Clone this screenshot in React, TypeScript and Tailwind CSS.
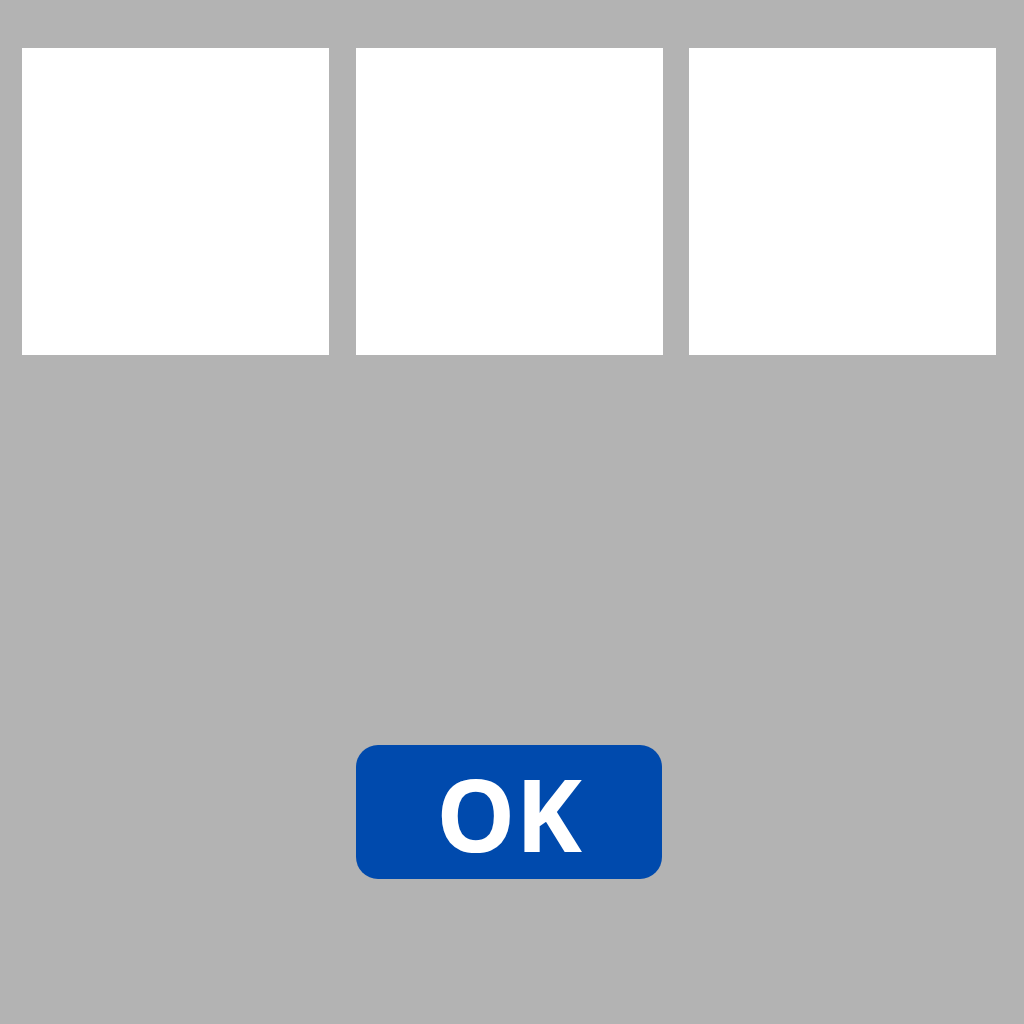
export default function App() {
  return (
    <div className="flex h-[1024px] w-[1024px] flex-col bg-[#b3b3b3]">
      <div className="flex gap-[26.5px] pl-[22px] pt-[48px]">
        <div className="h-[307px] w-[307px] bg-white" />
        <div className="h-[307px] w-[307px] bg-white" />
        <div className="h-[307px] w-[307px] bg-white" />
      </div>
      <div className="mt-[390px] flex pl-[356px]">
        <button
          type="button"
          className="flex h-[134px] w-[306px] items-center justify-center rounded-[22px] bg-[#004aad] text-white"
        >
          <span className="inline-block pt-[2px] text-[100px] font-bold leading-none [font-family:'Open_Sans',sans-serif]">
            OK
          </span>
        </button>
      </div>
    </div>
  )
}
